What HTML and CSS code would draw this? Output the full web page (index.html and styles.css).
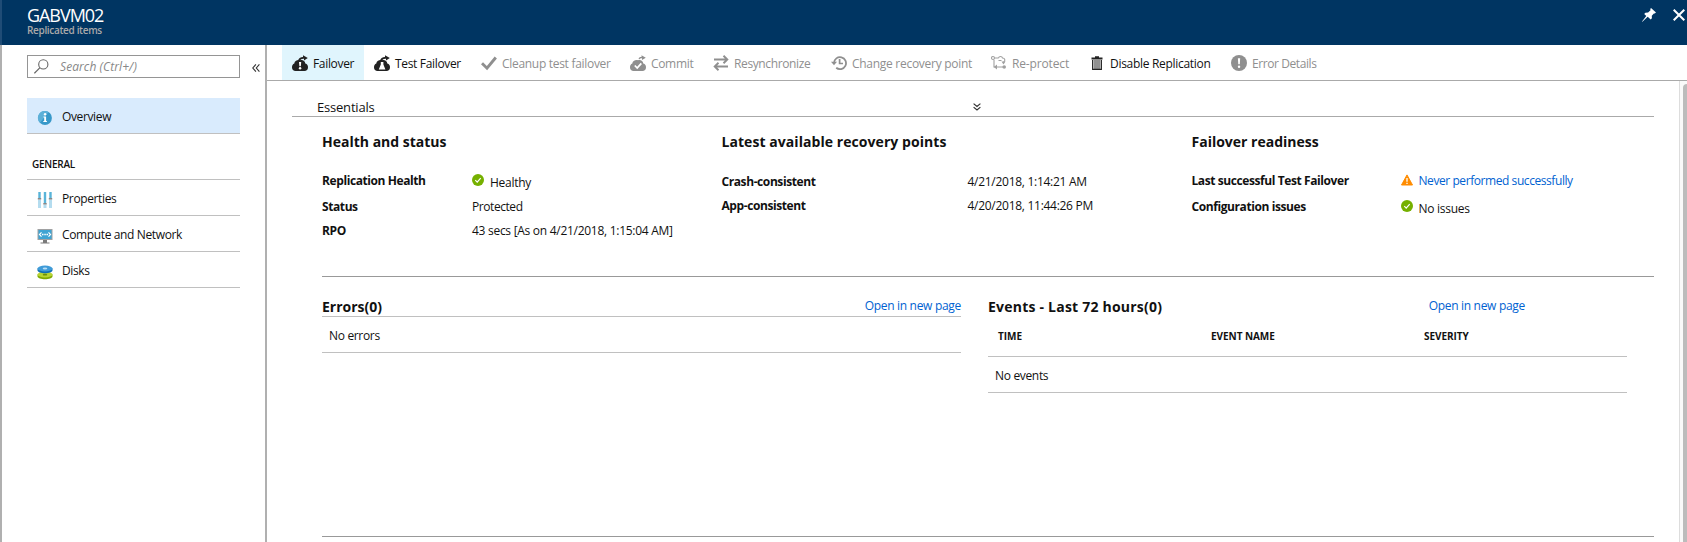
FILE: index.html
```html
<!DOCTYPE html>
<html lang="en">
<head>
<meta charset="utf-8">
<title>GABVM02 - Replicated items</title>
<link rel="stylesheet" href="styles.css">
</head>
<body>
<div class="blade">
  <header class="header">
    <div class="titles">
      <h1 class="title"><span>GABVM02</span></h1>
      <p class="subtitle"><span>Replicated items</span></p>
    </div>
    <div class="window-actions">
      <svg class="pin" width="14" height="14" viewBox="0 0 14 14"><path d="M9 0l5 4.600-1.300.9-.8-.1-2.100 2.300.1 2.600-1.200 1.300-3-2.900L.4 13.800l-.4-.3 4.300-5.600-2.100-2 1.200-1.200 2.700-.1 2.400-2.300-.2-1.200z" fill="#fff"/></svg>
      <svg class="close" width="12" height="12" viewBox="0 0 12 12"><path d="M.7.7l10.600 10.600M11.300.7L.7 11.300" stroke="#fff" stroke-width="2" fill="none"/></svg>
    </div>
  </header>
  <div class="body">
    <nav class="sidebar">
      <div class="search-row">
        <div class="search">
          <svg width="15" height="15" viewBox="0 0 15 15"><circle cx="9.300" cy="5.400" r="4.600" fill="none" stroke="#666" stroke-width="1.100"/><path d="M6 8.700L.4 14.300" stroke="#666" stroke-width="1.200"/></svg>
          <span class="placeholder">Search (Ctrl+/)</span>
        </div>
        <svg class="collapse" width="8" height="8" viewBox="0 0 8 8"><path d="M3.900.4L.8 4l3.100 3.600M7.400.4L4.300 4l3.100 3.600" fill="none" stroke="#333" stroke-width="1.100"/></svg>
      </div>
      <div class="item selected">
        <svg width="16" height="16" viewBox="0 0 16 16"><circle cx="8" cy="8" r="6.900" fill="#3798c9"/><path d="M3 12.800A6.900 6.900 0 0 1 11.500 2z" fill="#5cb0d8"/><circle cx="8.100" cy="4.300" r="1.200" fill="#fff"/><path d="M6.500 6.600h2.600v4.500h.8v1H6.300v-1h.9V7.600h-.7z" fill="#fff"/></svg>
        <span>Overview</span>
      </div>
      <div class="group"><span>GENERAL</span></div>
      <div class="item">
        <svg width="16" height="16" viewBox="0 0 16 16"><path d="M2.500 0v6M8 0v11M13.500 0v6" stroke="#59b4d9" stroke-width="2.400"/><path d="M2.500 7.500V16M8 12.500V16M13.500 7.500V16" stroke="#b4dcef" stroke-width="3"/><path d="M.8 6.800h3.400M6.300 11.700h3.400M11.800 6.800h3.400" stroke="#888" stroke-width="1.400"/></svg>
        <span>Properties</span>
      </div>
      <div class="item">
        <svg width="16" height="16" viewBox="0 0 16 16"><path d="M.5 1h15v11H.5z" fill="#a0a1a2"/><path d="M1.500 2h13v9h-13z" fill="#3fa4d3"/><path d="M6 12h4v2.500h2.500v1h-9v-1H6z" fill="#7a7a7a"/><path d="M4.500 4.300L2.500 6.500l2 2.200M11.500 4.300l2 2.200-2 2.200" fill="none" stroke="#fff" stroke-width="1.200"/><path d="M5 6.500h1.500M7.300 6.500h1.500M9.500 6.500H11" stroke="#fff" stroke-width="1.500"/></svg>
        <span>Compute and Network</span>
      </div>
      <div class="item">
        <svg width="16" height="16" viewBox="0 0 16 16"><path d="M.5 10.500v1.700c0 4 15 4 15 0v-1.700z" fill="#7fa900"/><ellipse cx="8" cy="10.500" rx="7.500" ry="3" fill="#b8d432"/><ellipse cx="8" cy="10.700" rx="2.300" ry=".9" fill="#6d9300"/><path d="M.5 4.500v1.700c0 4 15 4 15 0V4.500z" fill="#0f6fb5"/><ellipse cx="8" cy="4.500" rx="7.500" ry="3" fill="#3f9bd8"/><ellipse cx="8" cy="4.500" rx="2.300" ry=".9" fill="#b9def5"/></svg>
        <span>Disks</span>
      </div>
    </nav>
    <main class="main">
      <div class="toolbar">
        <div class="cmd c1 on"><svg width="16" height="16" viewBox="0 0 16 16"><path d="M2.300 8.500C2.500 6 5.500 4.500 8 5.300c2.500-.8 5 .5 5.300 3.200 2 .5 2.700 2 2.700 3.800 0 2.500-1.500 3.700-3.500 3.700h-9C1.500 16 0 14.500 0 12.500s.8-3.500 2.300-4z" fill="#222"/><path d="M6 6c.3-2.800 2.500-4 5-4V.3L15.800 3 12 5.500V3.700c-2-.2-3.500.5-4 2.300z" fill="#222"/><path d="M7 7h2.200l-.4 4.300H7.400z" fill="#fff"/><circle cx="8.100" cy="13.200" r="1.200" fill="#fff"/></svg><span>Failover</span></div>
        <div class="cmd c2"><svg width="16" height="16" viewBox="0 0 16 16"><path d="M2.300 8.500C2.500 6 5.500 4.500 8 5.300c2.500-.8 5 .5 5.300 3.200 2 .5 2.700 2 2.700 3.800 0 2.500-1.500 3.700-3.500 3.700h-9C1.500 16 0 14.500 0 12.500s.8-3.500 2.300-4z" fill="#222"/><path d="M6 6c.3-2.800 2.500-4 5-4V.3L15.800 3 12 5.500V3.700c-2-.2-3.500.5-4 2.300z" fill="#222"/><path d="M6.800 7h2.600v2.500l2 5H4.800l2-5z" fill="#fff"/></svg><span>Test Failover</span></div>
        <div class="cmd c3 off"><svg width="16" height="16" viewBox="0 0 16 16"><path d="M1 8.200l5 5L14.800 2.500" fill="none" stroke="#8f8f8f" stroke-width="2.900"/></svg><span>Cleanup test failover</span></div>
        <div class="cmd c4 off"><svg width="16" height="16" viewBox="0 0 16 16"><path d="M2.300 8.500C2.500 6 5.500 4.500 8 5.300c2.500-.8 5 .5 5.300 3.200 2 .5 2.700 2 2.700 3.800 0 2.500-1.500 3.700-3.500 3.700h-9C1.500 16 0 14.500 0 12.500s.8-3.500 2.300-4z" fill="#8f8f8f"/><path d="M8.500 4c.5-1.700 1.500-2 3-2V.3L15.800 2.700 12 5V3.300c-1.500 0-2 .3-2.300 1z" fill="#8f8f8f"/><path d="M4.800 10.500l2.400 2.500 4.100-4.600" fill="none" stroke="#fff" stroke-width="1.800"/></svg><span>Commit</span></div>
        <div class="cmd c5 off"><svg width="16" height="16" viewBox="0 0 16 16"><path d="M1 4.500h13M10.500.8l3.800 3.700-3.800 3.700M15 11.500H2M5.500 7.800L1.700 11.500l3.800 3.700" fill="none" stroke="#8f8f8f" stroke-width="1.900"/></svg><span>Resynchronize</span></div>
        <div class="cmd c6 off"><svg width="16" height="16" viewBox="0 0 16 16"><path d="M3 8a6 6 0 1 1 2.200 4.800" fill="none" stroke="#8f8f8f" stroke-width="1.800"/><path d="M0 6.700h6L3 10.200z" fill="#8f8f8f"/><path d="M8.600 4v4.500H12" fill="none" stroke="#8f8f8f" stroke-width="1.700"/></svg><span>Change recovery point</span></div>
        <div class="cmd c7 off"><svg width="16" height="16" viewBox="0 0 16 16"><g fill="none" stroke="#a0a0a0" stroke-width="1.100"><circle cx="2" cy="3" r="1.500"/><path d="M3.500 3h4M3 5v7h10M7.500 3C8 1 11 1 11.500 3c2.500 0 3.300 3 1 4M7.500 5.500h3"/></g><path d="M6 9.500v5L2.800 12zM10.500 6.500h4L12.500 9.500z" fill="#a0a0a0"/><circle cx="13.200" cy="12" r="1.800" fill="#a0a0a0"/></svg><span>Re-protect</span></div>
        <div class="cmd c8"><svg width="12" height="16" viewBox="0 0 12 16"><path d="M4 1.300h4v1.200h3.500v1.900H.5V2.500H4z" fill="#222"/><path d="M1.700 5v9.300h8.600V5" fill="none" stroke="#222" stroke-width="1.300"/><path d="M4 5v9M6 5v9M8 5v9" stroke="#222" stroke-width="1"/></svg><span>Disable Replication</span></div>
        <div class="cmd c9 off"><svg width="16" height="16" viewBox="0 0 16 16"><circle cx="8" cy="8" r="8" fill="#8f8f8f"/><path d="M6.900 3.200h2.300l-.4 6H7.300z" fill="#fff"/><circle cx="8.050" cy="11.700" r="1.200" fill="#fff"/></svg><span>Error Details</span></div>
      </div>
      <div class="scroll">
        <div class="content">
          <div class="essentials">
            <span class="essentials-title">Essentials</span>
            <svg width="8" height="8" viewBox="0 0 8 8"><path d="M.6.6L4 3.500 7.400.6M.6 4.100L4 7l3.400-2.900" fill="none" stroke="#333" stroke-width="1.200"/></svg>
          </div>
          <div class="summary">
            <section class="col health">
              <h2><span>Health and status</span></h2>
              <dl>
                <dt><span>Replication Health</span></dt>
                <dd class="with-icon low"><svg width="12" height="12" viewBox="0 0 12 12"><circle cx="6" cy="6" r="6" fill="#75b000"/><path d="M3.300 6.200l1.900 1.900 3.500-4" fill="none" stroke="#fff" stroke-width="1.200"/></svg><span>Healthy</span></dd>
                <dt><span>Status</span></dt><dd><span class="tight">Protected</span></dd>
                <dt><span>RPO</span></dt><dd><span>43 secs [As on 4/21/2018, 1:15:04 AM]</span></dd>
              </dl>
            </section>
            <section class="col points">
              <h2><span>Latest available recovery points</span></h2>
              <dl>
                <dt><span>Crash-consistent</span></dt><dd><span>4/21/2018, 1:14:21 AM</span></dd>
                <dt><span>App-consistent</span></dt><dd><span>4/20/2018, 11:44:26 PM</span></dd>
              </dl>
            </section>
            <section class="col ready">
              <h2><span>Failover readiness</span></h2>
              <dl>
                <dt><span>Last successful Test Failover</span></dt>
                <dd class="with-icon"><svg width="12" height="12" viewBox="0 0 12 12"><path d="M6 .9L11.500 11H.5z" fill="#ff8c00" stroke="#ff8c00" stroke-width="1" stroke-linejoin="round"/><path d="M6 4v3.800M6 8.700V10" stroke="#fff" stroke-width="1.300"/></svg><a class="tight">Never performed successfully</a></dd>
                <dt><span>Configuration issues</span></dt>
                <dd class="with-icon low"><svg width="12" height="12" viewBox="0 0 12 12"><circle cx="6" cy="6" r="6" fill="#75b000"/><path d="M3.300 6.200l1.900 1.900 3.500-4" fill="none" stroke="#fff" stroke-width="1.200"/></svg><span>No issues</span></dd>
              </dl>
            </section>
          </div>
          <div class="panels">
            <section class="panel errors">
              <div class="panel-head"><h3><span>Errors(0)</span></h3><a>Open in new page</a></div>
              <div class="empty"><span>No errors</span></div>
            </section>
            <section class="panel events">
              <div class="panel-head"><h3><span>Events - Last 72 hours(0)</span></h3><a>Open in new page</a></div>
              <div class="columns"><span>TIME</span><span>EVENT NAME</span><span>SEVERITY</span></div>
              <div class="empty"><span>No events</span></div>
            </section>
          </div>
        </div>
        <div class="scrollbar"><div class="thumb"></div></div>
      </div>
    </main>
  </div>
</div>
</body>
</html>
```
FILE: styles.css
```css
* { box-sizing: border-box; margin: 0; padding: 0; font-weight: inherit; font-size: inherit; }
body { font: 12px/16px "Open Sans", "Noto Sans", sans-serif; color: #111; background: #fff; }
svg { display: block; flex: none; }
a { color: #0062d1; }
span, a { white-space: nowrap; }

.blade { display: flex; flex-direction: column; height: 542px; overflow: hidden; }
.header { display: flex; justify-content: space-between; height: 45px; padding-left: 25px; background: #003562; border-left: 2px solid #1f4c76; }
.titles { padding-top: 4px; }
.title { font-size: 18px; line-height: 22px; font-weight: 400; letter-spacing: -1.05px; color: #fff; }
.subtitle { font-size: 10px; line-height: 12px; font-weight: 600; letter-spacing: -0.33px; color: #aaa9a9; margin-top: -2px; }
.window-actions { display: flex; gap: 17px; padding: 8px 2px 0 0; }
.close { margin-top: 1px; }

.body { display: flex; flex: 1; min-height: 0; border-left: 2px solid #b0b0b0; }
.sidebar { width: 265px; padding: 10px 0 0 25px; border-right: 2px solid #b0b0b0; }
.search-row { display: flex; align-items: center; }
.search { display: flex; align-items: center; gap: 11px; width: 213px; height: 23px; padding-left: 6px; border: 1px solid #959595; }
.placeholder { font-style: italic; letter-spacing: 0.08px; color: #888; }
.collapse { margin-left: 12px; margin-top: 2px; }
.item { display: flex; align-items: center; gap: 9px; width: 213px; height: 36px; padding-left: 10px; letter-spacing: -0.37px; border-bottom: 1px solid #c0c0c0; }
.item svg { margin-top: 5px; }
.item span { padding-top: 2px; }
.selected { margin-top: 20px; background: #d9ebfd; }
.group { width: 213px; height: 46px; padding: 22px 0 0 5px; font-size: 10px; font-weight: 600; letter-spacing: -0.25px; border-bottom: 1px solid #c0c0c0; }

.main { display: flex; flex-direction: column; flex: 1; min-width: 0; }
.toolbar { display: flex; height: 36px; padding-left: 15px; letter-spacing: -0.33px; border-bottom: 1px solid #aaa; }
.cmd { display: flex; align-items: center; gap: 5px; padding-left: 10px; }
.cmd span { padding-top: 2px; }
.off { color: #8f8f8f; }
.on { background: #e0f5fd; }
.c1 { width: 82px; }
.c2 { width: 107px; }
.c3 { width: 149px; letter-spacing: -0.3px; }
.c4 { width: 83px; }
.c5 { width: 118px; letter-spacing: -0.38px; }
.c6 { width: 160px; letter-spacing: -0.28px; }
.c7 { width: 100px; letter-spacing: -0.15px; }
.c8 { width: 140px; gap: 7px; letter-spacing: -0.3px; }
.c9 { width: 110px; letter-spacing: -0.42px; }

.scroll { display: flex; flex: 1; min-height: 0; }
.content { flex: 1; padding-left: 25px; }
.essentials { display: flex; align-items: center; width: 1362px; height: 36px; padding: 16px 0 0 25px; border-bottom: 1px solid #aaa; }
.essentials-title { width: 656px; font-size: 13px; letter-spacing: -0.2px; padding-top: 1px; }
.summary { display: flex; width: 1332px; height: 160px; margin-left: 30px; border-bottom: 1px solid #999; }
.col h2 { height: 37px; margin-top: 15px; font-size: 14px; line-height: 20px; font-weight: 700; }
.health { width: 399.5px; }
.points { width: 470px; }
.points h2 { letter-spacing: 0.06px; }
.col dl { display: grid; letter-spacing: -0.28px; }
.health dl { grid-template-columns: 150px auto; grid-template-rows: 26px 24px 24px; padding-top: 4px; }
.points dl { grid-template-columns: 246px auto; grid-auto-rows: 24px; padding-top: 5px; }
.ready dl { grid-template-columns: 209px auto; grid-auto-rows: 26px; padding-top: 4px; }
dt { font-weight: 700; letter-spacing: -0.41px; }
.tight { letter-spacing: -0.43px; }
.with-icon { display: flex; gap: 6px; }
.with-icon svg { margin-top: 1px; }
.low span { padding-top: 2px; }

.panels { display: flex; gap: 27px; width: 1332px; height: 260px; margin-left: 30px; border-bottom: 1px solid #999; }
.panel { width: 639px; padding-top: 20px; }
.panel-head { display: flex; justify-content: space-between; height: 20px; }
.panel-head h3 { font-size: 14px; line-height: 20px; font-weight: 700; }
.panel-head a { padding-top: 1px; letter-spacing: -0.3px; }
.errors .panel-head { border-bottom: 1px solid #c0c0c0; }
.events .panel-head { padding-right: 102px; }
.events h3 { letter-spacing: 0.22px; }
.columns { display: grid; grid-template-columns: 213px 213px 200px; height: 40px; padding: 11px 0 0 10px; font-size: 10px; font-weight: 700; letter-spacing: -0.05px; border-bottom: 1px solid #c0c0c0; }
.empty { height: 36px; padding: 11px 0 0 7px; letter-spacing: -0.33px; border-bottom: 1px solid #c0c0c0; }
.scrollbar { width: 8px; padding: 3px 0 0 3px; border-left: 1px solid #ddd; background: #fafafa; }
.thumb { height: 100%; background: #bcbcbc; border-top-left-radius: 4px; }
```
